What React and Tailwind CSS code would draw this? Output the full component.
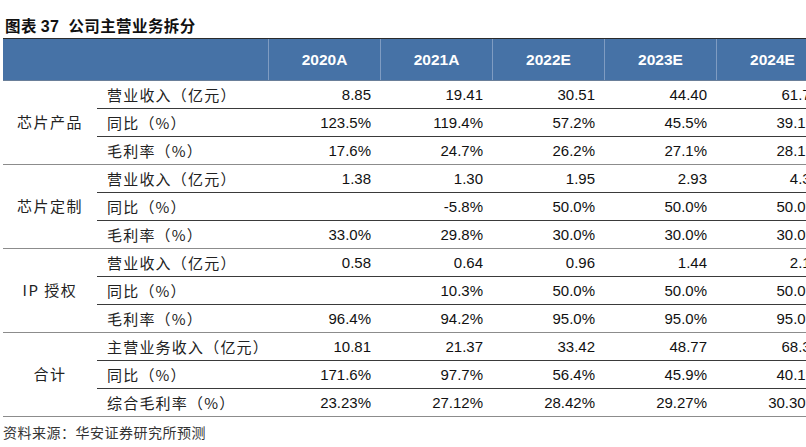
const YEARS = ['2020A', '2021A', '2022E', '2023E', '2024E']

const GROUPS = [
  {
    name: '芯片产品',
    rows: [
      ['营业收入（亿元）', ['8.85', '19.41', '30.51', '44.40', '61.74']],
      ['同比（%）', ['123.5%', '119.4%', '57.2%', '45.5%', '39.1%']],
      ['毛利率（%）', ['17.6%', '24.7%', '26.2%', '27.1%', '28.1%']],
    ],
  },
  {
    name: '芯片定制',
    rows: [
      ['营业收入（亿元）', ['1.38', '1.30', '1.95', '2.93', '4.39']],
      ['同比（%）', ['', '-5.8%', '50.0%', '50.0%', '50.0%']],
      ['毛利率（%）', ['33.0%', '29.8%', '30.0%', '30.0%', '30.0%']],
    ],
  },
  {
    name: 'IP 授权',
    rows: [
      ['营业收入（亿元）', ['0.58', '0.64', '0.96', '1.44', '2.16']],
      ['同比（%）', ['', '10.3%', '50.0%', '50.0%', '50.0%']],
      ['毛利率（%）', ['96.4%', '94.2%', '95.0%', '95.0%', '95.0%']],
    ],
  },
  {
    name: '合计',
    rows: [
      ['主营业务收入（亿元）', ['10.81', '21.37', '33.42', '48.77', '68.30']],
      ['同比（%）', ['171.6%', '97.7%', '56.4%', '45.9%', '40.1%']],
      ['综合毛利率（%）', ['23.23%', '27.12%', '28.42%', '29.27%', '30.30%']],
    ],
  },
]

const cjk = "font-['Noto_Sans_CJK_SC',sans-serif]"
const num = "font-['Liberation_Sans',Arial,sans-serif]"

function Group({ group }) {
  return (
    <div className="flex border-b border-[#8c8c8c]">
      <div className={`w-[94px] shrink-0 flex items-center justify-center text-[15px] tracking-[1.5px] text-[#222] ${cjk}`}>
        {group.name}
      </div>
      <div className="flex flex-col">
        {group.rows.map(([label, values], i) => (
          <div
            key={label}
            className={`flex items-center ${i < 2 ? 'h-[28px] border-b border-[#3a3a3a]' : 'h-[27px]'}`}
          >
            <div className={`w-[171px] shrink-0 pl-[10px] pt-[1px] text-[15px] tracking-[1.2px] text-[#222] ${cjk}`}>
              {label}
            </div>
            {values.map((v, j) => (
              <div key={j} className={`w-[112px] shrink-0 pr-[9px] pt-[1px] text-right text-[15px] text-[#111] ${num}`}>
                {v}
              </div>
            ))}
          </div>
        ))}
      </div>
    </div>
  )
}

export default function App() {
  return (
    <div className="w-[806px] h-[447px] overflow-hidden bg-white">
      <div className="w-[830px] pl-[3px]">
        <div className={`pt-[15px] h-[38px] pl-[2px] text-[15.5px] font-bold leading-[20px] tracking-[0.4px] text-[#111] ${cjk}`}>
          图表<span className={`${num} ml-[4px] mr-[9px] text-[16px]`}>37</span>公司主营业务拆分
        </div>

        <div className="flex h-[43px] bg-[#4672a6] border-t border-[#2b2b2b] border-b border-b-[#6a7f99]">
          <div className="w-[265px] shrink-0" />
          {YEARS.map((y) => (
            <div
              key={y}
              className={`w-[112px] shrink-0 flex items-center justify-center border-l border-[#7f9cc2] text-[15.5px] font-bold text-white ${num}`}
            >
              {y}
            </div>
          ))}
        </div>

        {GROUPS.map((g) => (
          <Group key={g.name} group={g} />
        ))}

        <div className={`pt-[5px] text-[14px] tracking-[0.5px] text-[#333] ${cjk}`}>
          资料来源：华安证券研究所预测
        </div>
      </div>
    </div>
  )
}
